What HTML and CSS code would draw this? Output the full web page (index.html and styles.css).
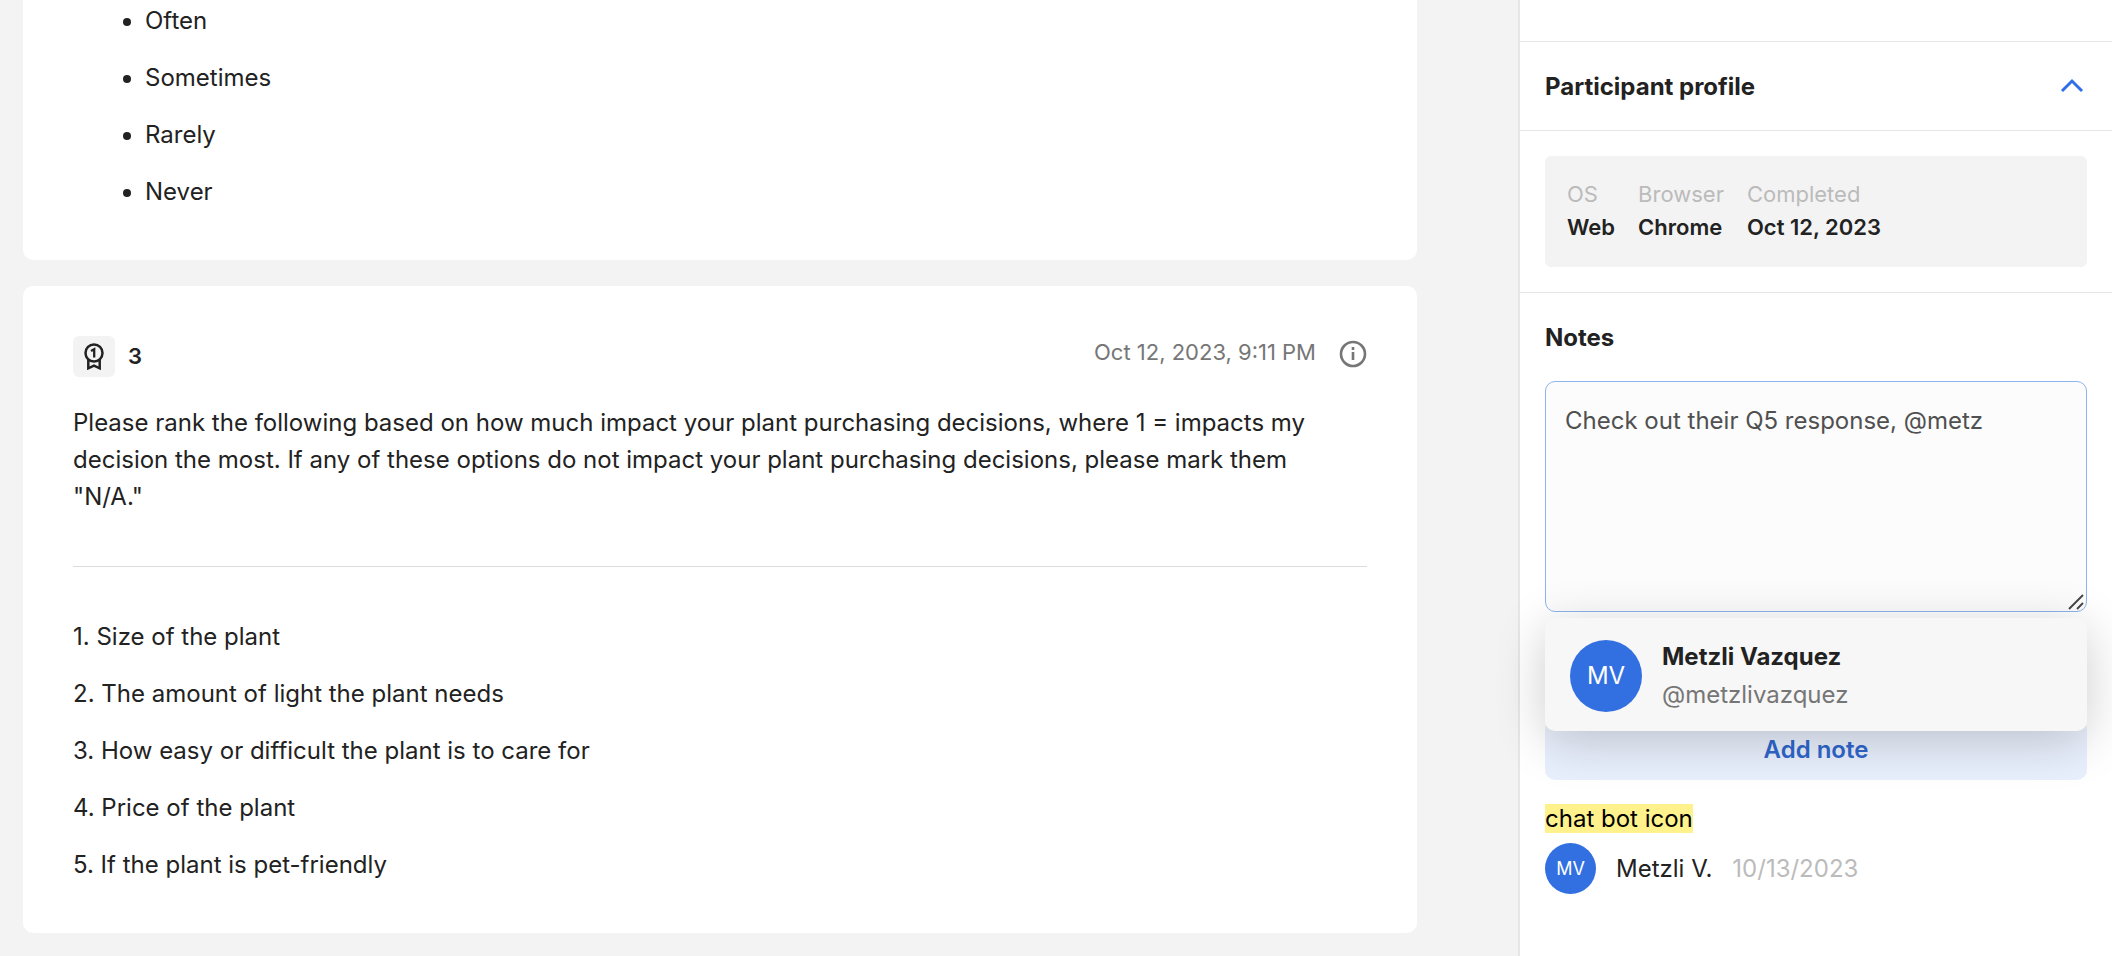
FILE: index.html
```
<!DOCTYPE html>
<html lang="en">
<head>
<meta charset="utf-8">
<title>Participant response</title>
<link rel="stylesheet" href="styles.css">
</head>
<body>
<div class="layout">
  <main class="responses">
    <section class="card card-continued">
      <ul class="choices">
        <li>Often</li>
        <li>Sometimes</li>
        <li>Rarely</li>
        <li>Never</li>
      </ul>
    </section>

    <section class="card">
      <header class="card-header">
        <span class="badge">
          <svg class="badge-icon" viewBox="0 0 20 27" fill="none" stroke="currentColor" stroke-width="2.5" aria-hidden="true">
            <circle cx="10" cy="10" r="8.5"/>
            <path d="M4.3 17v8.3l5.7-2.6 5.7 2.6V17"/>
            <path d="M7 8l3.2-1.8V14.5" stroke-width="2.3"/>
          </svg>
        </span>
        <span class="number">3</span>
        <div class="card-meta">
          <time class="timestamp">Oct 12, 2023, 9:11 PM</time>
          <button class="icon-button" type="button" aria-label="Response details">
            <svg class="info-icon" viewBox="0 0 28 28" fill="none" stroke="currentColor" stroke-width="2.6" aria-hidden="true">
              <circle cx="14" cy="14" r="12"/>
              <path d="M14 12v8M14 7v3"/>
            </svg>
          </button>
        </div>
      </header>
      <p class="question">Please rank the following based on how much impact your plant purchasing decisions, where 1 = impacts my decision the most. If any of these options do not impact your plant purchasing decisions, please mark them "N/A."</p>
      <hr class="rule">
      <ol class="ranking">
        <li>Size of the plant</li>
        <li>The amount of light the plant needs</li>
        <li>How easy or difficult the plant is to care for</li>
        <li>Price of the plant</li>
        <li>If the plant is pet-friendly</li>
      </ol>
    </section>
  </main>

  <aside class="sidebar">
    <div class="sidebar-top"></div>
    <header class="profile-header">
      <h2 class="heading">Participant profile</h2>
      <button class="icon-button" type="button" aria-label="Collapse participant profile" aria-expanded="true">
        <svg class="chevron" viewBox="0 0 30 24" fill="none" stroke="currentColor" stroke-width="3" aria-hidden="true">
          <path d="M5 16L15 6l10 10"/>
        </svg>
      </button>
    </header>
    <div class="profile">
      <dl class="facts">
        <div><dt>OS</dt><dd>Web</dd></div>
        <div><dt>Browser</dt><dd>Chrome</dd></div>
        <div><dt>Completed</dt><dd>Oct 12, 2023</dd></div>
      </dl>
    </div>
    <section class="notes">
      <h2 class="heading"><label for="note">Notes</label></h2>
      <div class="composer">
        <textarea id="note" class="note-input">Check out their Q5 response, @metz</textarea>
        <svg class="grip" viewBox="0 0 16 16" fill="none" stroke="currentColor" stroke-width="1.8" aria-hidden="true">
          <path d="M1 15L15 1M9 15l6-6"/>
        </svg>
        <button class="mention" type="button">
          <span class="avatar avatar-large">MV</span>
          <span class="mention-text">
            <strong class="mention-name">Metzli Vazquez</strong>
            <span class="mention-handle">@metzlivazquez</span>
          </span>
        </button>
      </div>
      <button class="add-note" type="button">Add note</button>
      <article class="note">
        <p class="note-body"><mark>chat bot icon</mark></p>
        <footer class="note-meta">
          <span class="avatar">MV</span>
          <span class="note-author">Metzli V.</span>
          <time class="note-date">10/13/2023</time>
        </footer>
      </article>
    </section>
  </aside>
</div>
</body>
</html>
```
FILE: styles.css
```
* {
  box-sizing: border-box;
}

body {
  margin: 0;
  background: #f3f3f3;
  color: #222;
  font: 24px/37px Inter, "Liberation Sans", sans-serif;
}

h2, p, ul, ol, dl, dd {
  margin: 0;
  padding: 0;
}

button {
  border: 0;
  padding: 0;
  background: none;
  color: inherit;
  font: inherit;
}

.layout {
  display: grid;
  grid-template-columns: minmax(0, 1fr) 594px;
  min-height: 100vh;
}

.responses {
  display: flex;
  flex-direction: column;
  gap: 26px;
  padding: 0 101px 23px 23px;
}

.card {
  padding: 50px;
  border-radius: 10px;
  background: #fff;
}

.card-continued {
  padding-top: 2px;
  border-radius: 0 0 10px 10px;
}

.choices,
.ranking {
  display: flex;
  flex-direction: column;
  gap: 20px;
}

.choices {
  padding-left: 72px;
}

.ranking {
  list-style-position: inside;
}

.ranking li::marker {
  font-variant-numeric: normal;
}

.card-header {
  display: flex;
  align-items: center;
  margin-bottom: 27px;
}

.badge {
  display: grid;
  place-items: center;
  width: 42px;
  height: 41px;
  border-radius: 6px;
  background: #f3f3f3;
}

.badge-icon {
  width: 20px;
  height: 27px;
}

.number {
  margin-left: 13px;
  font-size: 22px;
  font-weight: 600;
}

.card-meta {
  display: flex;
  gap: 23px;
  margin: 0 0 5px auto;
}

.timestamp {
  color: #767676;
  font-size: 22px;
  line-height: 24px;
}

.icon-button {
  display: flex;
}

.info-icon {
  width: 28px;
  height: 28px;
  color: #767676;
}

.question {
  padding-right: 20px;
}

.rule {
  margin: 51px 0;
  border: 0;
  border-top: 1px solid #ddd;
}

.sidebar {
  border-left: 2px solid #e6e6e6;
  background: #fff;
}

.sidebar-top {
  height: 42px;
  border-bottom: 1px solid #e6e6e6;
}

.profile-header {
  display: flex;
  align-items: center;
  justify-content: space-between;
  padding: 26px 25px 25px;
  border-bottom: 1px solid #e6e6e6;
}

.heading {
  font-size: 24px;
  font-weight: 700;
}

.chevron {
  width: 30px;
  height: 24px;
  color: #2f70e8;
}

.profile {
  padding: 25px;
  border-bottom: 1px solid #e6e6e6;
}

.facts {
  display: flex;
  gap: 23px;
  padding: 22px 22px 23px;
  border-radius: 6px;
  background: #f3f3f3;
  font-size: 22px;
  line-height: 33px;
}

.facts dt {
  color: #bbb;
}

.facts dd {
  font-weight: 600;
}

.notes {
  padding: 26px 25px;
}

.composer {
  position: relative;
  margin-top: 25px;
}

.note-input {
  display: block;
  width: 100%;
  height: 231px;
  padding: 20px 19px;
  border: 1px solid #8db4ee;
  border-radius: 10px;
  outline: 0;
  background: #fcfcfc;
  color: #505050;
  font: inherit;
  resize: none;
}

.grip {
  position: absolute;
  right: 3px;
  bottom: 2px;
  width: 16px;
  height: 16px;
  color: #444;
}

.mention {
  position: absolute;
  top: calc(100% + 6px);
  left: 0;
  display: flex;
  align-items: center;
  gap: 20px;
  width: 100%;
  padding: 20px 25px 17px;
  border-radius: 10px;
  background: #f7f7f7;
  box-shadow: 0 10px 50px rgba(0, 0, 0, 0.2);
  line-height: 38px;
  text-align: left;
}

.avatar {
  display: grid;
  flex: none;
  place-items: center;
  width: 51px;
  height: 51px;
  border-radius: 50%;
  background: #3270e2;
  color: #fff;
  font-size: 18px;
}

.avatar-large {
  width: 72px;
  height: 72px;
  font-size: 24px;
}

.mention-text {
  display: flex;
  flex-direction: column;
}

.mention-name {
  font-weight: 700;
}

.mention-handle {
  color: #767676;
}

.add-note {
  width: 100%;
  margin-top: 107px;
  padding: 12px;
  border-radius: 10px;
  background: #e9f0fd;
  color: #2f66cc;
  font-weight: 600;
}

.note {
  margin-top: 20px;
}

.note-body mark {
  background: #fff28c;
  color: #000;
}

.note-meta {
  display: flex;
  align-items: center;
  gap: 20px;
  margin-top: 6px;
}

.note-date {
  color: #bbb;
}
```
